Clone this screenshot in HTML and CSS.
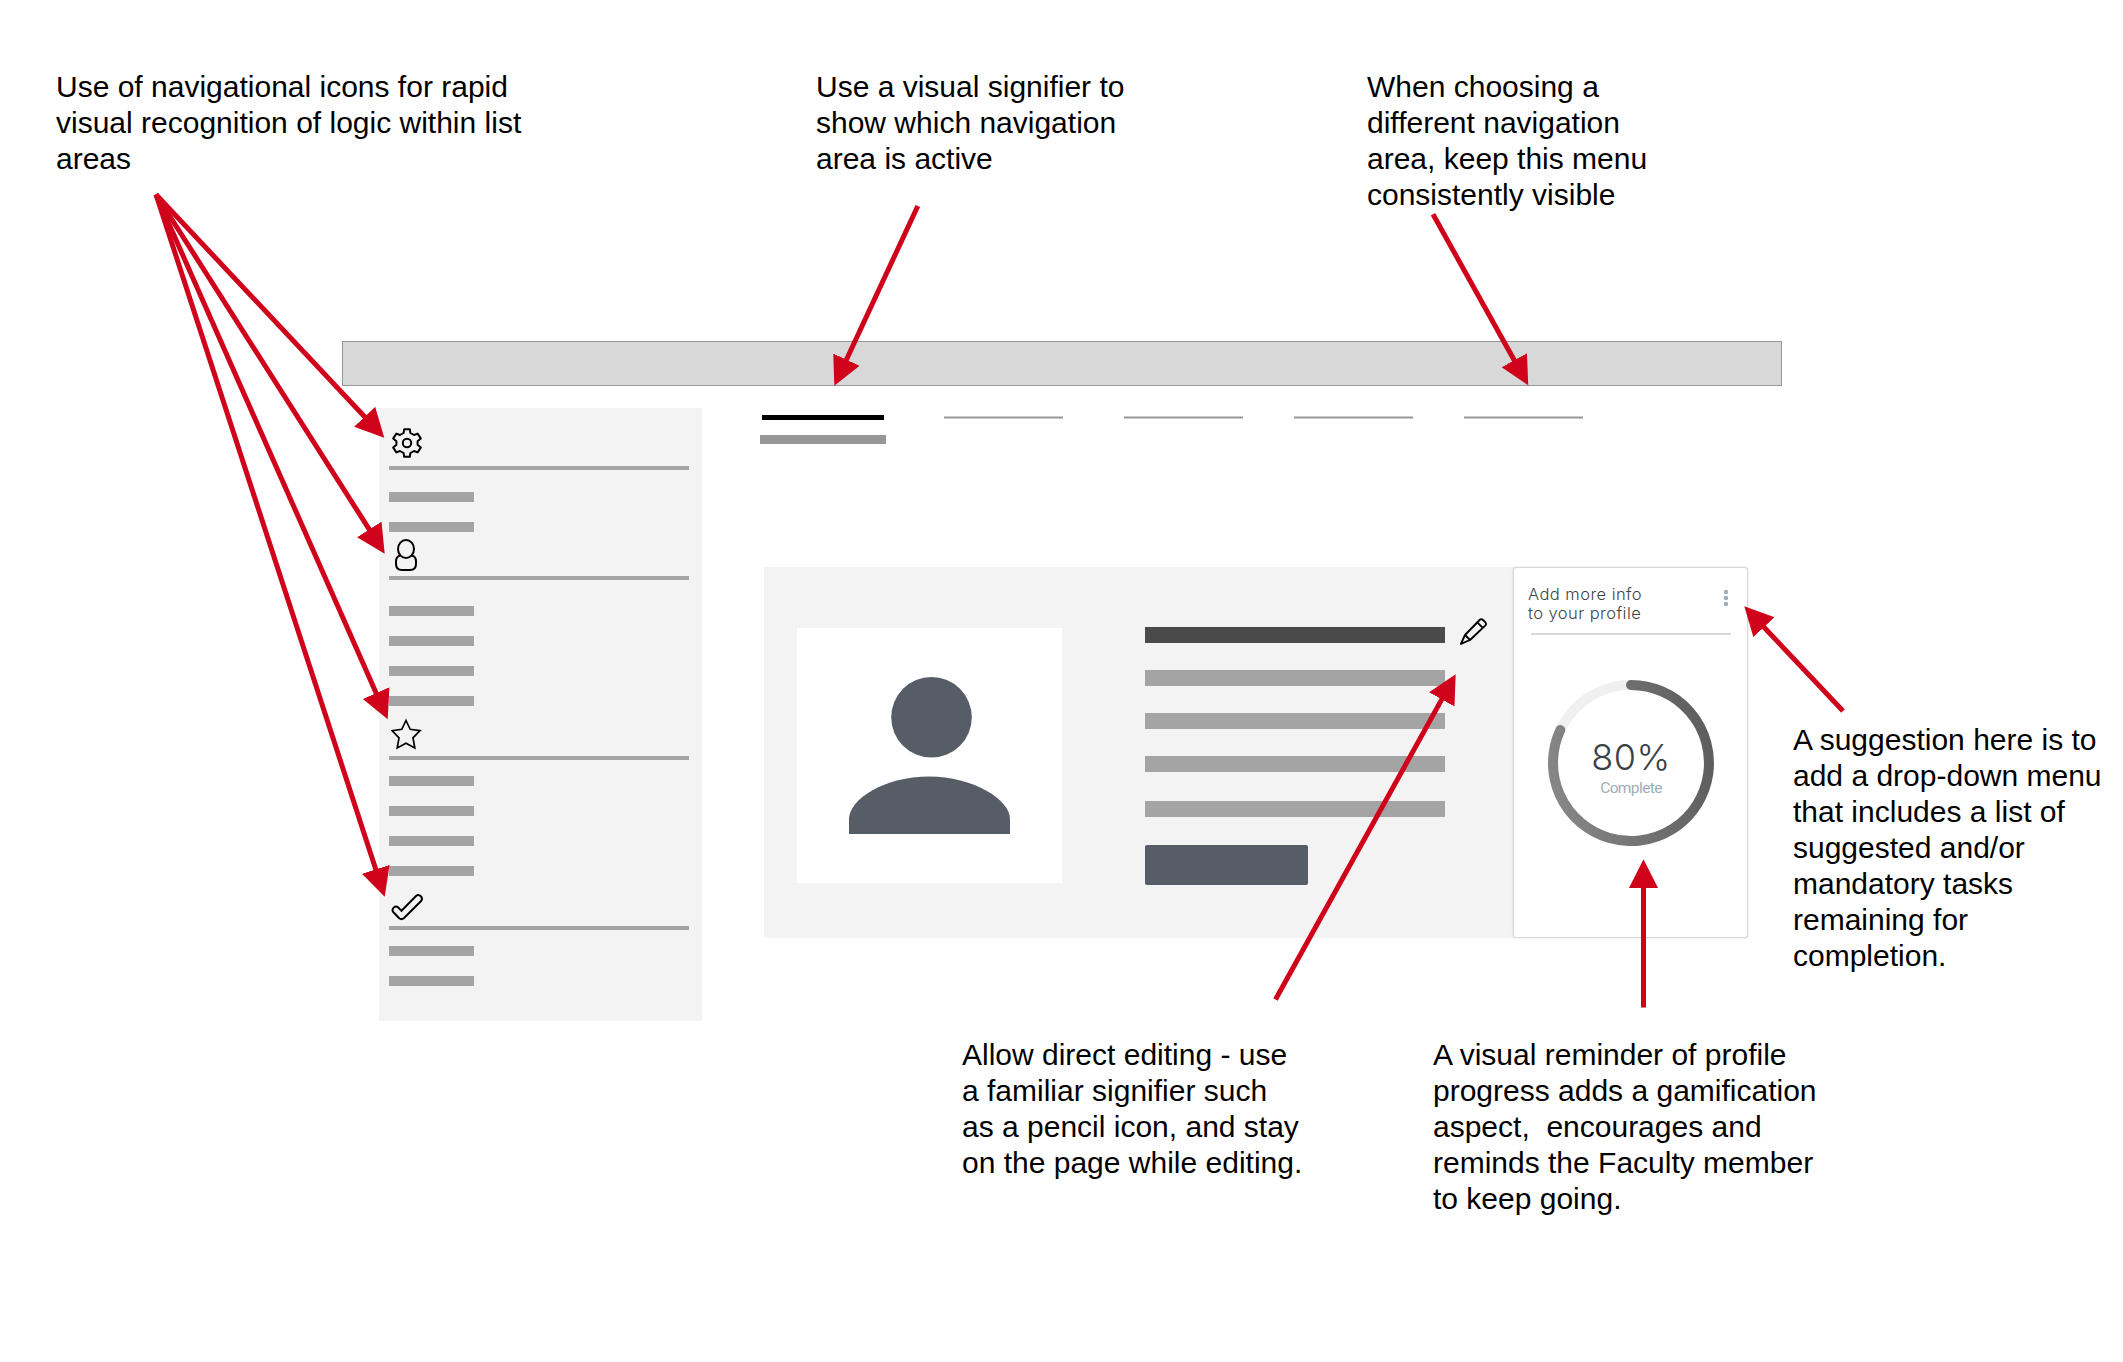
FILE: index.html
```html
<!DOCTYPE html>
<html lang="en">
<head>
<meta charset="utf-8">
<title>Faculty profile wireframe</title>
<link rel="stylesheet" href="styles.css">
</head>
<body>
<main class="wireframe">
  <header class="topbar"></header>
  <div class="columns">
    <aside class="sidebar">
      <section class="group group-settings">
        <svg class="icon" width="32" height="34" viewBox="0 0 32 34"><g fill="none" stroke="#000" stroke-width="2" stroke-linejoin="round"><path d="M13.200 2.200H18.800L19.400 6L23 8L26.600 6.600L29.800 11.400L26.600 14.200V17.800L29.800 20.600L26.600 25.400L23 24L19.400 26L18.800 29.800H13.200L12.600 26L9 24L5.400 25.400L2.200 20.600L5.400 17.800V14.200L2.200 11.400L5.400 6.600L9 8L12.600 6z"/><circle cx="16" cy="16" r="4.200"/></g></svg>
        <hr class="rule">
        <ul class="items"><li></li><li></li></ul>
      </section>
      <section class="group group-people">
        <svg class="icon" width="32" height="34" viewBox="0 0 32 34"><g fill="none" stroke="#000" stroke-width="2"><ellipse cx="15" cy="11" rx="8" ry="9"/><path d="M9.500 17.500C6.500 18 5 20.500 5 23.500V26q0 6 6 6h8q6 0 6-6v-2.500c0-3-1.500-5.500-4.500-6"/></g></svg>
        <hr class="rule">
        <ul class="items"><li></li><li></li><li></li><li></li></ul>
      </section>
      <section class="group group-favorites">
        <svg class="icon" width="34" height="34" viewBox="0 0 34 34"><path fill="none" stroke="#000" stroke-width="1.700" d="M15 4.500L19.200 13.300L29 14.600L22 21.800L23.800 32L15 27.300L6.200 32L8 21.800L1 14.600L10.800 13.300z"/></svg>
        <hr class="rule">
        <ul class="items"><li></li><li></li><li></li><li></li></ul>
      </section>
      <section class="group group-tasks">
        <svg class="icon" width="34" height="34" viewBox="0 0 34 34"><path fill="none" stroke="#000" stroke-width="2" d="M2.900 19.700A3.600 3.600 0 0 1 7.800 15L11.500 18.800L26 4A3.600 3.600 0 0 1 31.100 9L13.800 26.200q-2.300 1.800-4.600 0z"/></svg>
        <hr class="rule">
        <ul class="items"><li></li><li></li></ul>
      </section>
    </aside>
    <div class="content">
      <nav class="tabs">
        <span class="tab tab-active"></span>
        <span class="tab"></span>
        <span class="tab"></span>
        <span class="tab"></span>
        <span class="tab"></span>
      </nav>
      <div class="profile">
        <div class="photo">
          <svg width="265" height="255" viewBox="0 0 265 255"><g fill="#575d67"><circle cx="134.500" cy="89.300" r="40.300"/><path d="M52 206v-15c0-20 36-42.500 80-42.500s81 23 81 42.500v15z"/></g></svg>
        </div>
        <div class="details">
          <div class="line line-title"></div>
          <div class="line"></div>
          <div class="line"></div>
          <div class="line"></div>
          <div class="line line-last"></div>
          <div class="button"></div>
        </div>
        <svg class="pencil" width="30" height="30" viewBox="0 0 30 30"><g fill="none" stroke="#000" stroke-width="1.900" stroke-linejoin="round"><path d="M1.900 26.900L6 18L20.600 3q1.700-1.700 3.400 0l2.200 2.200q1.700 1.700 0 3.400L11 23z"/><path d="M18.300 5.400l5.300 5.300M6 18l5 5"/></g></svg>
        <section class="progress">
          <header class="progress-head">
            <h2>Add more info<br>to your profile</h2>
            <svg class="dots" width="6" height="18" viewBox="0 0 6 18"><g fill="#9eadb5"><circle cx="3" cy="3" r="2.200"/><circle cx="3" cy="9" r="2.200"/><circle cx="3" cy="15" r="2.200"/></g></svg>
          </header>
          <div class="ring">
            <svg width="166" height="166" viewBox="0 0 166 166"><defs><linearGradient id="ringFill" x1="0" y1=".6" x2="1" y2=".4"><stop offset="0" stop-color="#868686"/><stop offset="1" stop-color="#5e5e5e"/></linearGradient></defs><g fill="none" stroke-width="10"><circle cx="83" cy="83" r="78" stroke="#f0f0f0"/><path d="M83 5A78 78 0 1 1 12.300 50" stroke="url(#ringFill)" stroke-linecap="round"/></g></svg>
            <div class="ring-text"><strong>80%</strong><span>Complete</span></div>
          </div>
        </section>
      </div>
    </div>
  </div>
</main>

<p class="note note-icons">Use of navigational icons for rapid<br>visual recognition of logic within list<br>areas</p>
<p class="note note-signifier">Use a visual signifier to<br>show which navigation<br>area is active</p>
<p class="note note-menu">When choosing a<br>different navigation<br>area, keep this menu<br>consistently visible</p>
<p class="note note-suggestion">A suggestion here is to<br>add a drop-down menu<br>that includes a list of<br>suggested and/or<br>mandatory tasks<br>remaining for<br>completion.</p>
<p class="note note-editing">Allow direct editing - use<br>a familiar signifier such<br>as a pencil icon, and stay<br>on the page while editing.</p>
<p class="note note-reminder">A visual reminder of profile<br>progress adds a gamification<br>aspect,&nbsp; encourages and<br>reminds the Faculty member<br>to keep going.</p>

<svg class="arrows" width="2123" height="1362" viewBox="0 0 2123 1362">
  <defs><marker id="head" markerUnits="userSpaceOnUse" markerWidth="30" markerHeight="30" refX="1.700" refY="14.500" orient="auto"><path d="M0 0L28.700 14.500L0 29z" fill="#d0021b"/></marker></defs>
  <g stroke="#d0021b" stroke-width="5">
    <path d="M156 194.500L365.800 418" marker-end="url(#head)"/>
    <path d="M156 194.500L370.200 530.900" marker-end="url(#head)"/>
    <path d="M156 194.500L376.800 694.600" marker-end="url(#head)"/>
    <path d="M156 194.500L376.300 871" marker-end="url(#head)"/>
    <path d="M917.800 206L845.700 361.200" marker-end="url(#head)"/>
    <path d="M1433 214.300L1515.100 361.700" marker-end="url(#head)"/>
    <path d="M1275.500 999.500L1442.600 697.900" marker-end="url(#head)"/>
    <path d="M1843 711L1762.800 626" marker-end="url(#head)"/>
    <path d="M1643.500 1007.500V886.300" marker-end="url(#head)"/>
  </g>
</svg>
</body>
</html>
```
FILE: styles.css
```css
* { box-sizing: border-box; margin: 0; padding: 0; }

body {
  position: relative;
  width: 2123px;
  height: 1362px;
  overflow: hidden;
  background: #fff;
  color: #000;
  font-family: "Liberation Sans", Arial, sans-serif;
}

svg { display: block; }

.wireframe { width: 1782px; padding: 341px 0 0 342px; }
.topbar { height: 45px; background: #d8d8d8; border: 1px solid #979797; }

.columns { display: flex; align-items: flex-start; gap: 58px; padding-left: 37px; }

/* Sidebar */
.sidebar {
  flex: none;
  width: 323px;
  height: 613px;
  margin-top: 22px;
  padding: 0 13px 0 10px;
  background: #f3f3f3;
  border-radius: 2px;
}
.group { display: flex; flex-direction: column; }
.icon { flex: none; }
.rule { height: 4px; border: 0; background: #a4a4a4; }
.items { display: grid; gap: 20px; list-style: none; }
.items li { width: 85px; height: 10px; background: #a4a4a4; }

.group-settings { padding-top: 19px; }
.group-settings .icon { margin-left: 2px; margin-bottom: 5px; }
.group-settings .items { margin-top: 22px; }
.group-people { padding-top: 6px; }
.group-people .icon { margin-left: 2px; margin-bottom: 4px; }
.group-people .items { margin-top: 26px; }
.group-favorites { padding-top: 10px; }
.group-favorites .icon { margin-left: 2px; margin-bottom: 6px; }
.group-favorites .items { margin-top: 16px; }
.group-tasks { padding-top: 16px; }
.group-tasks .icon { margin-left: 1px; }
.group-tasks .items { margin-top: 16px; }

/* Tabs */
.content { width: 988px; padding-top: 29px; }
.tabs { display: flex; align-items: flex-start; height: 152px; }
.tab {
  flex: none;
  width: 119px;
  height: 3px;
  margin: 1px 0 0 51px;
  border: solid #cbcbcb;
  border-width: 1px 0;
  background: #979797;
}
.tab:nth-child(2) { margin-left: 57.500px; }
.tab:nth-child(3) { margin-left: 61px; }
.tab-active {
  width: 126px;
  height: 29px;
  margin: 0;
  border: 0;
  background:
    linear-gradient(#000, #000) 2px 0 / 122px 5px no-repeat,
    linear-gradient(#979797, #979797) 0 20px / 126px 9px no-repeat;
}

/* Profile card */
.profile {
  display: flex;
  align-items: flex-start;
  width: 984px;
  height: 371px;
  margin-left: 4px;
  background: #f3f3f3;
  border-radius: 2px;
}
.photo { flex: none; width: 265px; height: 255px; margin: 61px 83px 0 33px; background: #fff; }
.details { display: flex; flex-direction: column; flex: none; gap: 27px; width: 300px; padding-top: 60px; }
.line { height: 16px; background: #a4a4a4; }
.line-title { background: #4a4a4a; }
.line-last { margin-top: 2px; }
.button { width: 163px; height: 40px; margin-top: 1px; background: #575d67; border-radius: 2px; }
.pencil { flex: none; margin: 50px 24px 0 14px; }

.progress {
  flex: none;
  width: 235px;
  height: 371px;
  padding: 0 14px 0 15px;
  background: #fff;
  border: 1px solid #d8d8d8;
  border-radius: 3px;
  box-shadow: 0 0 2px rgba(0, 0, 0, .15);
}
.progress-head {
  display: flex;
  justify-content: space-between;
  height: 67px;
  margin: 0 2px 0 2px;
  padding-top: 17px;
  border-bottom: 2px solid #d8d8d8;
}
.progress h2 {
  margin-left: -3px;
  color: #3d4448;
  font: 300 16.500px/19px Inter, sans-serif;
  letter-spacing: .45px;
  white-space: nowrap;
}
.dots { margin: 4px 2px 0 0; }

.ring { display: grid; width: 166px; margin: 45px auto 0; }
.ring > * { grid-area: 1 / 1; }
.ring-text { display: flex; flex-direction: column; align-items: center; padding-top: 56px; }
.ring-text strong { color: #3a4145; font: 300 36px/42px Inter, sans-serif; letter-spacing: .5px; }
.ring-text span { margin-top: 1px; color: #9fadb5; font: 15.500px/18px Roboto, sans-serif; letter-spacing: -.6px; }

/* Callouts placed around the wireframe */
.note { position: absolute; font-size: 30px; line-height: 36px; white-space: nowrap; }
.note-icons { left: 56px; top: 69px; }
.note-signifier { left: 816px; top: 69px; }
.note-menu { left: 1367px; top: 69px; }
.note-suggestion { left: 1793px; top: 722px; }
.note-editing { left: 962px; top: 1037px; }
.note-reminder { left: 1433px; top: 1037px; }

.arrows { position: absolute; left: 0; top: 0; }
```
